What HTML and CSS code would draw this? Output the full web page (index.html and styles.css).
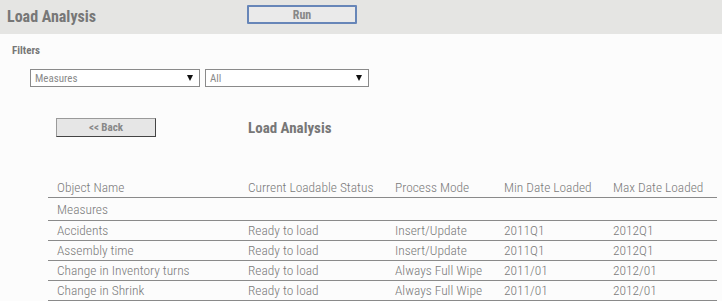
FILE: index.html
```html
<!DOCTYPE html>
<html>
<head>
<meta charset="utf-8">
<link rel="stylesheet" href="styles.css">
</head>
<body>
<div class="topbar">
  <div class="app-title">Load Analysis</div>
  <button class="run-btn">Run</button>
</div>
<div class="filters-label">Filters</div>
<div class="filters">
  <div class="dropdown dd-measures"><span>Measures</span><span class="arrow"></span></div>
  <div class="dropdown dd-all"><span>All</span><span class="arrow"></span></div>
</div>
<div class="subhead">
  <button class="back-btn">&lt;&lt; Back</button>
  <div class="sub-title">Load Analysis</div>
</div>
<table class="grid">
  <colgroup>
    <col class="c1"><col class="c2"><col class="c3"><col class="c4"><col class="c5">
  </colgroup>
  <thead>
    <tr><th>Object Name</th><th>Current Loadable Status</th><th>Process Mode</th><th>Min Date Loaded</th><th>Max Date Loaded</th></tr>
  </thead>
  <tbody>
    <tr class="group"><td colspan="5">Measures</td></tr>
    <tr><td>Accidents</td><td>Ready to load</td><td>Insert/Update</td><td>2011Q1</td><td>2012Q1</td></tr>
    <tr><td>Assembly time</td><td>Ready to load</td><td>Insert/Update</td><td>2011Q1</td><td>2012Q1</td></tr>
    <tr><td>Change in Inventory turns</td><td>Ready to load</td><td>Always Full Wipe</td><td>2011/01</td><td>2012/01</td></tr>
    <tr><td>Change in Shrink</td><td>Ready to load</td><td>Always Full Wipe</td><td>2011/01</td><td>2012/01</td></tr>
  </tbody>
</table>
</body>
</html>
```
FILE: styles.css
```css
html, body {
  margin: 0;
  padding: 0;
  background: #fcfcfc;
  font-family: "Roboto Condensed", Roboto, "Liberation Sans", sans-serif;
  color: #7a7a7a;
}
.topbar {
  height: 34px;
  background: #e5e5e3;
  display: flex;
  align-items: flex-start;
}
.app-title {
  width: 247px;
  padding-left: 7px;
  box-sizing: border-box;
  font-size: 16px;
  font-weight: bold;
  line-height: 34px;
  color: #777;
}
.run-btn {
  margin-top: 5px;
  width: 110px;
  height: 19px;
  border: 2px solid #6786b8;
  border-radius: 1px;
  background: #eaeaea;
  font-family: inherit;
  font-size: 12px;
  font-weight: bold;
  color: #888;
  padding: 0;
}
.filters-label {
  margin: 10px 0 0 12px;
  font-size: 11px;
  font-weight: bold;
  color: #777;
  line-height: 13px;
}
.filters {
  display: flex;
  gap: 5px;
  margin: 12px 0 0 30px;
}
.dropdown {
  height: 18px;
  box-sizing: border-box;
  border: 1px solid #8a8a8a;
  background: #fff;
  display: flex;
  align-items: center;
  justify-content: space-between;
  padding: 0 6px 0 4px;
  font-size: 11px;
  color: #8a8a8a;
}
.dd-measures { width: 170px; }
.dd-all { width: 164px; }
.arrow {
  width: 0;
  height: 0;
  border-left: 3px solid transparent;
  border-right: 3px solid transparent;
  border-top: 6px solid #111;
}
.subhead {
  display: flex;
  align-items: center;
  margin: 31px 0 0 56px;
}
.back-btn {
  width: 100px;
  height: 19px;
  box-sizing: border-box;
  background: #e6e6e6;
  border: 1px solid;
  border-color: #9a9a9a #444 #444 #9a9a9a;
  font-family: inherit;
  font-size: 11px;
  font-weight: bold;
  color: #888;
  padding: 0;
}
.sub-title {
  margin-left: 92px;
  font-size: 15px;
  font-weight: bold;
  color: #777;
}
.grid {
  margin: 40px 0 0 48px;
  width: 669px;
  border-collapse: collapse;
  table-layout: fixed;
  font-size: 13.4px;
  font-weight: 300;
}
.c1 { width: 191px; }
.c2 { width: 147px; }
.c3 { width: 109px; }
.c4 { width: 109px; }
.c5 { width: 113px; }
.grid th {
  text-align: left;
  font-weight: 300;
  padding: 0 0 0 9px;
  height: 20px;
  border-bottom: 1px solid #8a8a8a;
  white-space: nowrap;
}
.grid td {
  padding: 0 0 0 9px;
  height: 19px;
  border-bottom: 1px solid #8a8a8a;
  white-space: nowrap;
}
.grid tr.group td {
  height: 22px;
}
```
